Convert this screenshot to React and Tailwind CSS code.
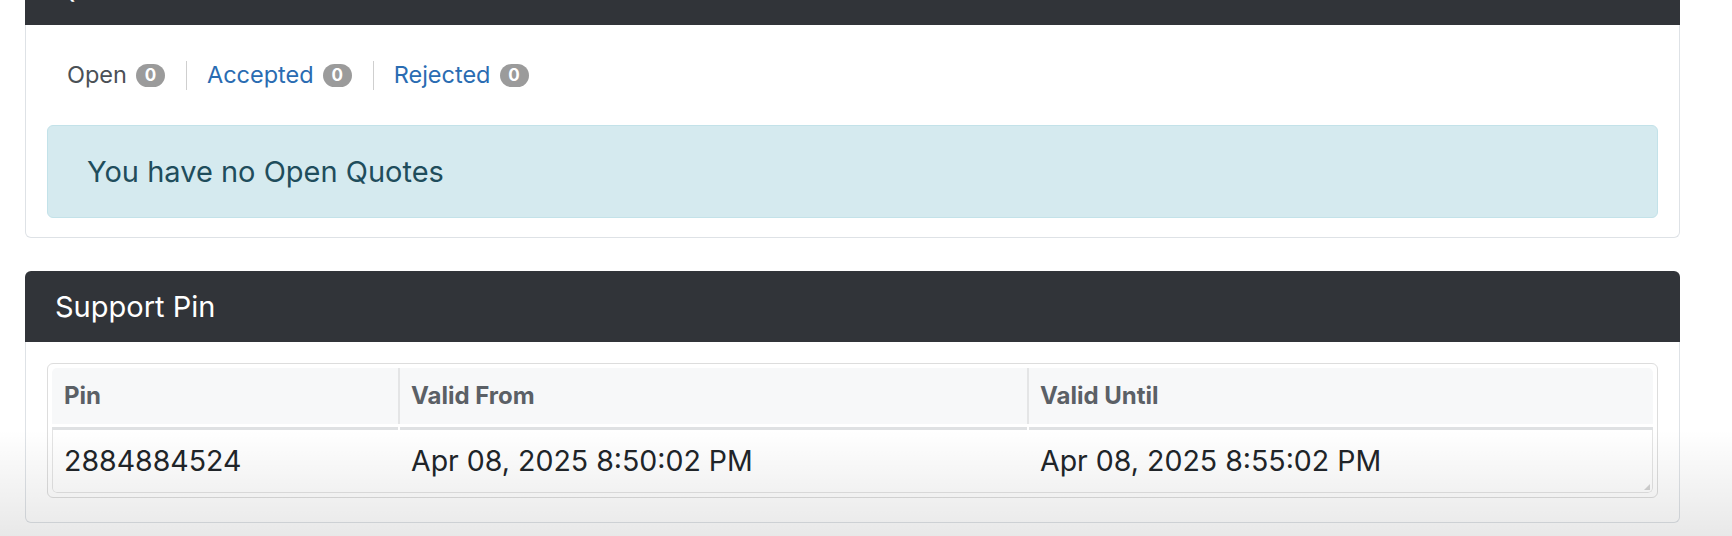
import React from 'react';

// Client area: Quotes + Support Pin panels (static)

const FONT = { fontFamily: 'Inter, "Noto Sans", sans-serif' };

const tabs = [
  { label: 'Open', count: 0, active: true },
  { label: 'Accepted', count: 0 },
  { label: 'Rejected', count: 0 },
];

const pins = [
  { pin: '2884884524', from: 'Apr 08, 2025 8:50:02 PM', until: 'Apr 08, 2025 8:55:02 PM' },
];

function Badge({ n }) {
  return (
    <span className="ml-[9px] inline-flex h-[23px] w-[29px] items-center justify-center rounded-full bg-[#9b9b9b] text-[17px] font-bold leading-none text-white">
      {n}
    </span>
  );
}

function CardHeader({ title }) {
  return (
    <div className="flex h-[71px] items-center rounded-t-[6px] bg-[#313439] px-[30px] text-[29px] text-white">
      {title}
    </div>
  );
}

export default function App() {
  return (
    <div className="relative h-[536px] w-full overflow-hidden bg-white" style={FONT}>
      <div className="pl-[25px] pr-[52px]">
        {/* Quotes card, header scrolled partly off the top */}
        <div className="-mt-[46px]">
          <CardHeader title="Quotes" />
          <div className="rounded-b-[6px] border-x border-b border-[#dee2e6] px-[21px] pb-[19px] pt-[35px]">
            <div className="mb-[35px] flex h-[30px] items-center pl-[20px] text-[23.5px]">
              {tabs.map((t, i) => (
                <React.Fragment key={t.label}>
                  {i > 0 && <span className="ml-[21px] mr-[20px] h-[29px] w-px bg-[#cfcfcf]" />}
                  <span className={t.active ? 'text-[#4b5056]' : 'text-[#2a6cb2]'}>{t.label}</span>
                  <Badge n={t.count} />
                </React.Fragment>
              ))}
            </div>
            <div className="flex h-[93px] items-center rounded-[6px] border border-[#c3e2e9] bg-[#d5eaef] pl-[39px] text-[29px] text-[#1f4d5c]">
              You have no Open Quotes
            </div>
          </div>
        </div>

        {/* Support Pin card */}
        <div className="mt-[33px]">
          <CardHeader title="Support Pin" />
          <div className="rounded-b-[6px] border-x border-b border-[#dee2e6] px-[21px] pb-[24px] pt-[21px]">
            <div className="rounded-[6px] border border-[#dddddd] p-[4px]">
              <div className="overflow-hidden rounded-[5px]">
                <div className="grid h-[56px] grid-cols-[346px_2px_627px_2px_1fr] text-[24px] font-bold text-[#5b6066]">
                  <div className="flex items-center bg-[#f7f8f9] pl-[12px]">Pin</div>
                  <div className="bg-[#e4e5e6]" />
                  <div className="flex items-center bg-[#f7f8f9] pl-[11px]">Valid From</div>
                  <div className="bg-[#e4e5e6]" />
                  <div className="flex items-center bg-[#f7f8f9] pl-[11px]">Valid Until</div>
                </div>
                <div className="mt-[3px] grid h-[3px] grid-cols-[346px_2px_627px_2px_1fr]">
                  <div className="bg-[#dfe1e3]" />
                  <div />
                  <div className="bg-[#dfe1e3]" />
                  <div />
                  <div className="bg-[#dfe1e3]" />
                </div>
                {pins.map((p) => (
                  <div
                    key={p.pin}
                    className="relative grid h-[63px] grid-cols-[345px_2px_627px_2px_1fr] rounded-b-[5px] border-x border-b border-[#e4e4e4] text-[28.5px] text-[#212529]"
                  >
                    <div className="flex items-center pl-[11px]">{p.pin}</div>
                    <div />
                    <div className="flex items-center pl-[11px]">{p.from}</div>
                    <div />
                    <div className="flex items-center pl-[11px]">{p.until}</div>
                    <svg className="absolute bottom-[2px] right-[2px]" width="6" height="6" viewBox="0 0 6 6">
                      <path d="M6 0 L6 6 L0 6 Z" fill="#d4d4d4" />
                    </svg>
                  </div>
                ))}
              </div>
            </div>
          </div>
        </div>
      </div>

      {/* bottom fade over the page */}
      <div className="pointer-events-none absolute inset-x-0 bottom-0 h-[106px] bg-linear-to-b from-transparent to-black/[0.09]" />
    </div>
  );
}
